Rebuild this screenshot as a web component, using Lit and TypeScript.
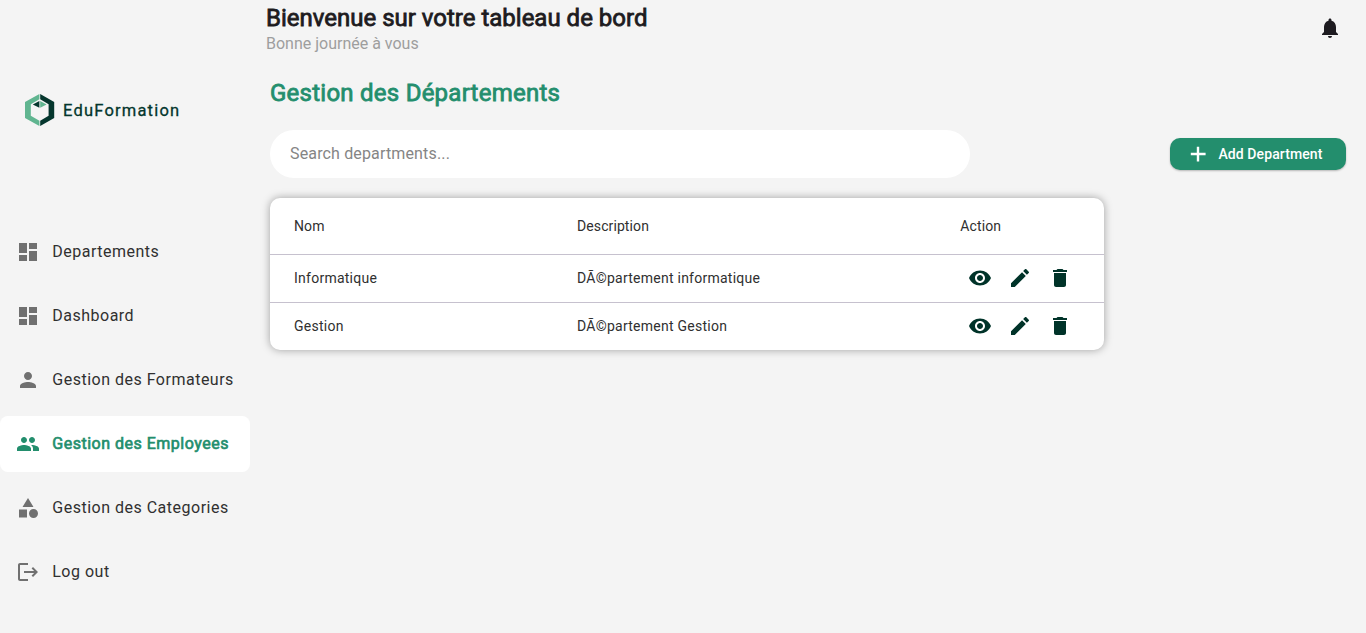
import { LitElement, html, css, svg } from "lit";
import { customElement, property, state } from "lit/decorators.js";

const ICONS: Record<string, string> = {
  dashboard: "M3 13h8V3H3v10zm0 8h8v-6H3v6zm10 0h8V11h-8v10zm0-18v6h8V3h-8z",
  person:
    "M12 12c2.21 0 4-1.79 4-4s-1.79-4-4-4-4 1.79-4 4 1.79 4 4 4zm0 2c-2.67 0-8 1.34-8 4v2h16v-2c0-2.66-5.33-4-8-4z",
  people:
    "M16 11c1.66 0 2.99-1.34 2.99-3S17.66 5 16 5c-1.66 0-3 1.34-3 3s1.34 3 3 3zm-8 0c1.66 0 2.99-1.34 2.99-3S9.66 5 8 5C6.34 5 5 6.34 5 8s1.34 3 3 3zm0 2c-2.33 0-7 1.17-7 3.5V19h14v-2.500c0-2.330-4.670-3.500-7-3.500zm8 0c-.29 0-.62.02-.97.050 1.160.84 1.970 1.970 1.970 3.450V19h6v-2.500c0-2.330-4.670-3.500-7-3.500z",
  category: "M12 2l-5.5 9h11zM17.5 13a4.5 4.5 0 1 0 0 9 4.5 4.5 0 0 0 0-9zM3 13.5h8v8H3z",
  logout:
    "M17 7l-1.41 1.41L18.170 11H8v2h10.170l-2.580 2.580L17 17l5-5zM4 5h8V3H4c-1.100 0-2 .9-2 2v14c0 1.100.9 2 2 2h8v-2H4V5z",
  bell: "M12 22c1.100 0 2-.9 2-2h-4c0 1.100.89 2 2 2zm6-6v-5c0-3.070-1.640-5.640-4.500-6.320V4c0-.83-.67-1.500-1.500-1.500s-1.500.67-1.500 1.500v.68C7.630 5.360 6 7.920 6 11v5l-2 2v1h16v-1l-2-2z",
  add: "M19.600 13.200h-6.400v6.400h-2.400v-6.400H4.800v-2.400h6V4.800h2.400v6h6.400z",
  eye: "M12 4.500C7 4.500 2.730 7.610 1 12c1.730 4.390 6 7.500 11 7.500s9.270-3.110 11-7.500c-1.730-4.390-6-7.500-11-7.500zM12 17c-2.760 0-5-2.240-5-5s2.240-5 5-5 5 2.240 5 5-2.240 5-5 5zm0-8c-1.660 0-3 1.340-3 3s1.340 3 3 3 3-1.340 3-3-1.340-3-3-3z",
  edit: "M3 17.250V21h3.750L17.810 9.940l-3.750-3.750L3 17.250zM20.710 7.040c.39-.39.39-1.020 0-1.410l-2.340-2.340c-.39-.39-1.020-.39-1.410 0l-1.830 1.830 3.750 3.750 1.830-1.830z",
  trash: "M6 19c0 1.100.9 2 2 2h8c1.100 0 2-.9 2-2V7H6v12zM19 4h-3.500l-1-1h-5l-1 1H5v2h14V4z",
};

@customElement("ui-icon")
class UiIcon extends LitElement {
  @property() name = "";
  @property({ type: Number }) size = 24;
  static styles = css`
    :host { display: inline-flex; flex: none; }
    svg { display: block; fill: currentColor; }
  `;
  render() {
    return html`<svg width=${this.size} height=${this.size} viewBox="0 0 24 24">
      ${svg`<path d=${ICONS[this.name]}></path>`}
    </svg>`;
  }
}

@customElement("side-menu")
class SideMenu extends LitElement {
  @state() active = "Gestion des Employees";
  private items = [
    ["dashboard", "Departements"],
    ["dashboard", "Dashboard"],
    ["person", "Gestion des Formateurs"],
    ["people", "Gestion des Employees"],
    ["category", "Gestion des Categories"],
    ["logout", "Log out"],
  ];
  static styles = css`
    :host { display: block; width: 250px; flex: none; }
    .brand { display: flex; align-items: center; height: 32px; padding: 94px 0 98px 25px; gap: 8px; }
    .mark { display: block; flex: none; }
    .word { font: 400 16.500px/32px "Roboto", sans-serif; letter-spacing: 1.200px; color: #04362d; -webkit-text-stroke: 0.3px #04362d; padding-top: 2px; white-space: nowrap; }
    .nav { display: flex; flex-direction: column; gap: 8px; }
    .item { display: flex; align-items: center; height: 56px; padding-left: 16px; gap: 12.250px; border-radius: 8px; color: #707070; cursor: pointer; }
    .label { font-size: 16px; line-height: 24px; letter-spacing: 0.5px; color: #303030; white-space: nowrap; }
    .active { background: #fff; color: #238e6d; }
    .active .label { color: #238e6d; -webkit-text-stroke: 0.65px #238e6d; }
  `;
  render() {
    return html`
      <div class="brand">
        <svg class="mark" width="30" height="32" viewBox="0 0 30 32">
          <path fill="#60b590" d="M14.400 0V5.200L5.800 10.200V21.800L14.400 26.700V32L0 24V8z" />
          <path fill="#04362d" d="M15.200 0V5.200L23.600 10.200V21.800L15.200 26.700V32L29.200 24V8z" />
          <path fill="#04362d" d="M14.400 7V13.800L7.800 10.500z" />
          <path fill="#60b590" d="M15.200 7V13.800L21.600 10.500z" />
        </svg>
        <span class="word">EduFormation</span>
      </div>
      <nav class="nav">
        ${this.items.map(
          ([icon, label]) => html`<div
            class="item ${label === this.active ? "active" : ""}"
            @click=${() => (this.active = label)}
          >
            <ui-icon name=${icon}></ui-icon><span class="label">${label}</span>
          </div>`
        )}
      </nav>
    `;
  }
}

@customElement("department-table")
class DepartmentTable extends LitElement {
  private rows = [
    ["Informatique", "DÃ©partement informatique"],
    ["Gestion", "DÃ©partement Gestion"],
  ];
  static styles = css`
    :host { display: block; width: 834px; }
    .card { background: #fff; border-radius: 10px; box-shadow: 0 0 8px rgba(0, 0, 0, 0.35); color: #303030; font-size: 14px; line-height: 20px; letter-spacing: 0.25px; }
    .row { display: grid; grid-template-columns: 283px 383.300px 1fr; align-items: center; box-sizing: border-box; height: 48px; padding: 0 0 1px 24px; border-top: 1px solid #c6c1ce; }
    .head { height: 56px; padding-bottom: 0; border-top: 0; letter-spacing: 0.1px; }
    .actions { display: flex; gap: 16px; padding-left: 7.700px; color: #003329; }
  `;
  render() {
    return html`<div class="card">
      <div class="row head"><span>Nom</span><span>Description</span><span>Action</span></div>
      ${this.rows.map(
        ([name, description]) => html`<div class="row">
          <span>${name}</span><span>${description}</span>
          <span class="actions">
            <ui-icon name="eye"></ui-icon><ui-icon name="edit"></ui-icon><ui-icon name="trash"></ui-icon>
          </span>
        </div>`
      )}
    </div>`;
  }
}

@customElement("app-root")
class AppRoot extends LitElement {
  static styles = css`
    :host { display: flex; height: 633px; overflow: hidden; background: #f4f4f4; font-family: "Roboto", sans-serif; font-weight: 400; }
    .main { flex: 1; min-width: 0; }
    .top { display: flex; justify-content: space-between; height: 72px; padding: 2px 24px 0 16px; box-sizing: border-box; }
    .hello { font-size: 24px; line-height: 32px; color: #1d1b20; -webkit-text-stroke: 0.8px #1d1b20; white-space: nowrap; }
    .sub { font-size: 16px; line-height: 20px; color: #9e9e9e; }
    .bell { padding-top: 14px; color: #1d1b20; }
    .content { padding: 0 20px; }
    .title { font-size: 24px; line-height: 32px; height: 37px; padding-top: 5px; margin-bottom: 16px; letter-spacing: 0.25px; color: #238e6d; -webkit-text-stroke: 0.8px #238e6d; white-space: nowrap; }
    .tools { display: flex; align-items: center; justify-content: space-between; margin-bottom: 20px; }
    .search { box-sizing: border-box; width: 700px; height: 48px; padding: 0 20px 2px; border: 0; border-radius: 24px; outline: 0; background: #fff; font: 400 16px "Roboto", sans-serif; letter-spacing: 0.15px; color: #1d1b20; }
    .search::placeholder { color: #858585; opacity: 1; }
    .add { display: flex; align-items: center; box-sizing: border-box; width: 175.600px; height: 32px; padding: 0 0 0 16px; gap: 8px; border: 0; border-radius: 10px; background: #238e6d; color: #fff; font: 500 14px/20px "Roboto", sans-serif; letter-spacing: 0.1px; box-shadow: 0 1px 2px rgba(0, 0, 0, 0.25); white-space: nowrap; }
  `;
  render() {
    return html`
      <side-menu></side-menu>
      <main class="main">
        <header class="top">
          <div>
            <div class="hello">Bienvenue sur votre tableau de bord</div>
            <div class="sub">Bonne journée à vous</div>
          </div>
          <div class="bell"><ui-icon name="bell"></ui-icon></div>
        </header>
        <section class="content">
          <div class="title">Gestion des Départements</div>
          <div class="tools">
            <input class="search" placeholder="Search departments..." />
            <button class="add"><ui-icon name="add"></ui-icon><span>Add Department</span></button>
          </div>
          <department-table></department-table>
        </section>
      </main>
    `;
  }
}
